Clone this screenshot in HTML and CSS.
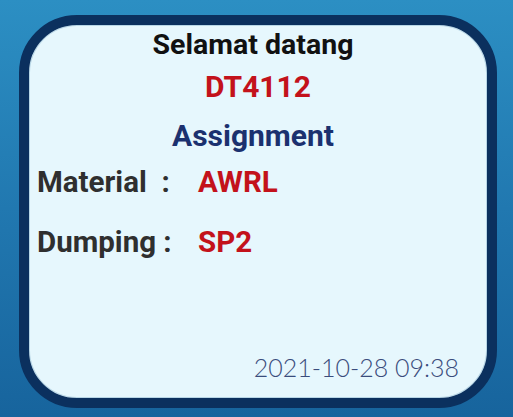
FILE: index.html
```html
<!DOCTYPE html>
<html>
<head>
<meta charset="utf-8">
<link rel="stylesheet" href="styles.css">
</head>
<body>
<div class="screen">
  <div class="card">
    <div class="welcome">Selamat datang</div>
    <div class="unit">DT4112</div>
    <div class="heading">Assignment</div>
    <div class="rows">
      <div class="label">Material&nbsp; :</div><div class="value">AWRL</div>
      <div class="label">Dumping :</div><div class="value">SP2</div>
    </div>
    <div class="stamp">2021-10-28 09:38</div>
  </div>
</div>
</body>
</html>
```
FILE: styles.css
```css
html, body {
  margin: 0;
  padding: 0;
}
body {
  width: 513px;
  height: 417px;
  overflow: hidden;
  font-family: Roboto, "Liberation Sans", sans-serif;
}
.screen {
  box-sizing: border-box;
  width: 513px;
  height: 417px;
  padding: 15px 16px 9px 19px;
  background: linear-gradient(180deg, #2c8fc3 0%, #2178b0 50%, #17649d 100%);
}
.card {
  box-sizing: border-box;
  width: 478px;
  height: 393px;
  border: 10px solid #0b305e;
  border-radius: 58px;
  background: #e6f7fd;
  box-shadow: inset 0 0 0 1px #b7d6e6;
  display: flex;
  flex-direction: column;
  padding: 0 18px 0 8px;
}
.welcome, .unit, .heading {
  text-align: center;
  font-weight: 700;
}
.welcome {
  color: #111;
  font-size: 28.5px;
  line-height: 34px;
  margin-top: 3px;
}
.unit {
  color: #c3121b;
  font-size: 30px;
  line-height: 36px;
  margin-top: 7px;
  padding-left: 10px;
}
.heading {
  color: #1b316f;
  font-size: 30px;
  line-height: 36px;
  margin-top: 13px;
}
.rows {
  display: grid;
  grid-template-columns: 161px auto;
  row-gap: 24px;
  margin-top: 10px;
  font-weight: 700;
  font-size: 29.5px;
  line-height: 36px;
}
.label {
  color: #2f2f2f;
}
.value {
  color: #c3121b;
}
.stamp {
  margin-top: auto;
  margin-bottom: 16px;
  margin-right: 10px;
  text-align: right;
  font-family: Lato, "Open Sans", sans-serif;
  font-weight: 300;
  font-size: 25px;
  line-height: 30px;
  color: #3a4c7c;
}
```
